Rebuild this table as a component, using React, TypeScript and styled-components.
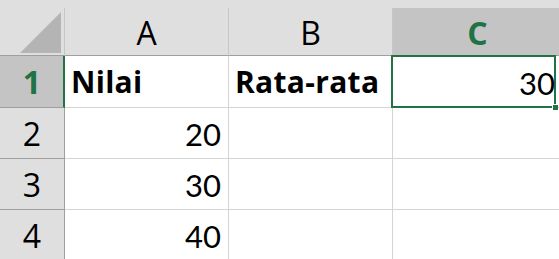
import React from "react";
import styled, { createGlobalStyle } from "styled-components";

const GlobalStyle = createGlobalStyle`
  html, body {
    margin: 0;
    padding: 0;
    background: #dfdfdf;
    overflow: hidden;
  }
`;

const Sheet = styled.div`
  width: 559px;
  height: 259px;
  padding-top: 8px;
  box-sizing: border-box;
  background: #dfdfdf;
  overflow: hidden;
`;

const Grid = styled.div`
  display: grid;
  grid-template-columns: 65px 164px 164px 170px;
  grid-template-rows: 48px 52px 51px 51px 51px;
  background: #ffffff;
`;

const Corner = styled.div`
  position: relative;
  background: #dfdfdf;
  border-right: 1px solid #c6c6c6;
  border-bottom: 1px solid #9f9f9f;
  box-sizing: border-box;
`;

const CornerTriangle = styled.svg`
  position: absolute;
  left: 20px;
  top: 4px;
`;

const ColHeader = styled.div<{ $active?: boolean }>`
  display: flex;
  align-items: center;
  justify-content: center;
  box-sizing: border-box;
  background: ${(p) => (p.$active ? "#c4c4c4" : "#dfdfdf")};
  border-right: 1px solid #c6c6c6;
  border-bottom: 1px solid #9f9f9f;
  font-family: "Open Sans", "Noto Sans", sans-serif;
  font-size: 32px;
  font-weight: ${(p) => (p.$active ? 700 : 400)};
  color: ${(p) => (p.$active ? "#217346" : "#000000")};
  padding-top: 1px;
`;

const RowHeader = styled.div<{ $active?: boolean }>`
  display: flex;
  align-items: center;
  justify-content: center;
  box-sizing: border-box;
  background: ${(p) => (p.$active ? "#c4c4c4" : "#dfdfdf")};
  border-right: ${(p) => (p.$active ? "2px solid #217346" : "1px solid #9f9f9f")};
  border-bottom: 1px solid #9f9f9f;
  font-family: "Open Sans", "Noto Sans", sans-serif;
  font-size: 32px;
  font-weight: ${(p) => (p.$active ? 700 : 400)};
  color: ${(p) => (p.$active ? "#217346" : "#000000")};
  padding-left: ${(p) => (p.$active ? "1px" : "0")};
`;

const Cell = styled.div<{ $align?: "left" | "right"; $bold?: boolean }>`
  position: relative;
  display: flex;
  align-items: center;
  justify-content: ${(p) => (p.$align === "right" ? "flex-end" : "flex-start")};
  box-sizing: border-box;
  padding: ${(p) => (p.$bold ? "0 6px 0 6px" : "2px 7px 0 7px")};
  border-right: 1px solid #d4d4d4;
  border-bottom: 1px solid #d4d4d4;
  font-family: ${(p) =>
    p.$bold ? '"Open Sans", "Noto Sans", sans-serif' : 'Lato, "Liberation Sans", sans-serif'};
  font-size: ${(p) => (p.$bold ? "30px" : "31px")};
  font-weight: ${(p) => (p.$bold ? 700 : 400)};
  letter-spacing: ${(p) => (p.$bold ? "0.3px" : "0")};
  color: #000000;
  white-space: nowrap;
`;

const Selection = styled.div`
  position: absolute;
  left: -2px;
  top: -1px;
  width: 165px;
  height: 53px;
  box-sizing: border-box;
  border: 2px solid #217346;
  pointer-events: none;
`;

const FillHandle = styled.div`
  position: absolute;
  right: -4px;
  bottom: -4px;
  width: 5px;
  height: 5px;
  background: #217346;
  border: 1px solid #ffffff;
  border-right: none;
  border-bottom: none;
`;

const Value = styled.span`
  position: relative;
  z-index: 1;
`;

type Row = { n: number; a: string; b: string; c: string };

const rows: Row[] = [
  { n: 1, a: "Nilai", b: "Rata-rata", c: "30" },
  { n: 2, a: "20", b: "", c: "" },
  { n: 3, a: "30", b: "", c: "" },
  { n: 4, a: "40", b: "", c: "" },
  { n: 5, a: "", b: "", c: "" },
];

export default function App() {
  return (
    <>
      <GlobalStyle />
      <Sheet>
        <Grid>
          <Corner>
            <CornerTriangle width="42" height="42" viewBox="0 0 42 42">
              <polygon points="0,41 41,41 41,0" fill="#b4b4b4" />
            </CornerTriangle>
          </Corner>
          <ColHeader>A</ColHeader>
          <ColHeader>B</ColHeader>
          <ColHeader $active>C</ColHeader>
          {rows.map((r) => {
            const header = r.n === 1;
            return (
              <React.Fragment key={r.n}>
                <RowHeader $active={header}>{r.n}</RowHeader>
                <Cell $align={header ? "left" : "right"} $bold={header}>
                  {r.a}
                </Cell>
                <Cell $bold={header}>{r.b}</Cell>
                <Cell $align="right">
                  {header && (
                    <Selection>
                      <FillHandle />
                    </Selection>
                  )}
                  <Value>{r.c}</Value>
                </Cell>
              </React.Fragment>
            );
          })}
        </Grid>
      </Sheet>
    </>
  );
}
